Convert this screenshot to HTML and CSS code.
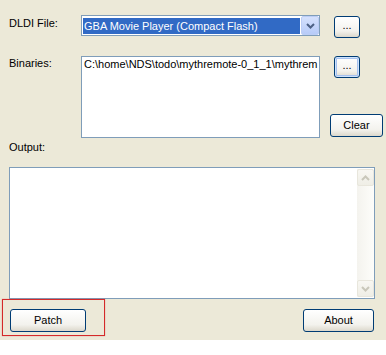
FILE: index.html
```html
<!DOCTYPE html>
<html lang="en">
<head>
  <meta charset="UTF-8">
  <meta name="viewport" content="width=device-width, initial-scale=1.0">
  <title>DLDI Patcher</title>
  <link rel="stylesheet" href="styles.css">
</head>
<body>

  <div class="window">

    <!-- DLDI file picker -->
    <div class="row">
      <div class="label">DLDI File:</div>
      <div class="combo">
        <div class="combo-value">GBA Movie Player (Compact Flash)</div>
        <div class="combo-arrow">
          <svg width="9" height="6" viewBox="0 0 9 6"><path d="M1 1 L4.5 4.5 L8 1" fill="none" stroke="#4d6185" stroke-width="2"/></svg>
        </div>
      </div>
      <div class="button small browse">...</div>
    </div>

    <!-- Binaries list -->
    <div class="row binaries-row">
      <div class="label label-bin">Binaries:</div>
      <div class="textbox binaries">C:\home\NDS\todo\mythremote-0_1_1\mythrem</div>
      <div class="side-buttons">
        <div class="button small hot">...</div>
        <div class="button clear">Clear</div>
      </div>
    </div>

    <div class="label output-label">Output:</div>

    <div class="textbox output">
      <div class="scrollbar">
        <div class="scroll-btn">
          <svg width="9" height="6" viewBox="0 0 9 6"><path d="M1 5 L4.5 1.5 L8 5" fill="none" stroke="#c9c7ba" stroke-width="2"/></svg>
        </div>
        <div class="scroll-btn">
          <svg width="9" height="6" viewBox="0 0 9 6"><path d="M1 1 L4.5 4.5 L8 1" fill="none" stroke="#c9c7ba" stroke-width="2"/></svg>
        </div>
      </div>
    </div>

    <div class="footer">
      <div class="button wide">Patch</div>
      <div class="button about">About</div>
    </div>

    <!-- highlight box around the Patch button -->
    <div class="marker"></div>
  </div>

</body>
</html>
```

FILE: styles.css
```css
/* Basic page */
body {
  margin: 0;
  background-color: #fff;
  font-family: "Liberation Sans", Arial, sans-serif;
  font-size: 11px;
  color: #000;
}

.window {
  position: relative;
  height: 340px;
  box-sizing: border-box;
  padding: 15px 12px 0 9px;
  background-color: #ece9d8;
}

.row {
  display: flex;
  align-items: flex-start;
}

.row > * {
  flex-shrink: 0;
}

.label {
  width: 72px;
  line-height: 13px;
  padding-top: 2px;
}

.label-bin {
  padding-top: 1px;
}

/* Combo box */
.combo {
  display: flex;
  width: 239px;
  height: 21px;
  box-sizing: border-box;
  border: 1px solid #7f9db9;
  background-color: #fff;
  padding: 1px 0 0 1px;
}

.combo-value {
  flex: 1;
  height: 16px;
  margin-top: 1px;
  padding-left: 1px;
  line-height: 16px;
  background-color: #316ac5;
  color: #fff;
  white-space: nowrap;
  overflow: hidden;
}

.combo-arrow {
  width: 18px;
  height: 19px;
  margin-top: -1px;
  margin-left: 1px;
  box-sizing: border-box;
  border: 1px solid #bccdf5;
  border-radius: 2px;
  background: linear-gradient(#d5e1fd, #b7cbf8);
  display: flex;
  align-items: center;
  justify-content: center;
}

/* Buttons */
.button {
  box-sizing: border-box;
  height: 23px;
  border: 1px solid #003c74;
  border-radius: 3px;
  background: linear-gradient(#ffffff, #f3f2ed 70%, #dcd8cc);
  text-align: center;
  line-height: 20px;
}

.small {
  width: 26px;
  height: 22px;
  line-height: 16px;
}

.browse {
  margin-left: 14px;
  margin-top: 1px;
}

.hot {
  margin-left: 4px;
  box-shadow: inset 0 0 0 1px #cee3fc, inset 0 0 0 2px #a6c1ef;
}

.binaries-row {
  margin-top: 18px;
}

.textbox {
  box-sizing: border-box;
  border: 1px solid #7f9db9;
  background-color: #fff;
}

.binaries {
  width: 239px;
  height: 82px;
  padding: 0 2px;
  line-height: 14px;
  white-space: nowrap;
  overflow: hidden;
}

.side-buttons {
  display: flex;
  flex-direction: column;
  margin-left: 10px;
}

.clear {
  width: 53px;
  margin-top: 36px;
}

.output-label {
  margin-top: 3px;
  padding-top: 0;
}

/* Output area with disabled scrollbar */
.output {
  display: flex;
  justify-content: flex-end;
  width: 366px;
  height: 132px;
  margin-top: 13px;
  padding: 1px 0 1px 0;
}

.scrollbar {
  display: flex;
  flex-direction: column;
  justify-content: space-between;
  width: 17px;
  background: linear-gradient(to right, #f4f3ee, #fdfdfa);
}

.scroll-btn {
  height: 17px;
  box-sizing: border-box;
  border: 1px solid #e8e6dc;
  border-radius: 2px;
  background: linear-gradient(#f8f7f2, #efeee6);
  display: flex;
  align-items: center;
  justify-content: center;
}

.footer {
  display: flex;
  justify-content: space-between;
  width: 366px;
  box-sizing: border-box;
  padding: 0 1px;
  margin-top: 10px;
}

.wide {
  width: 76px;
}

.about {
  width: 71px;
}

.marker {
  position: absolute;
  left: 2px;
  top: 299px;
  width: 101px;
  height: 35px;
  border: 1px solid #d42a2a;
  box-shadow: 0 0 1px rgba(212, 42, 42, 0.5);
}
```
